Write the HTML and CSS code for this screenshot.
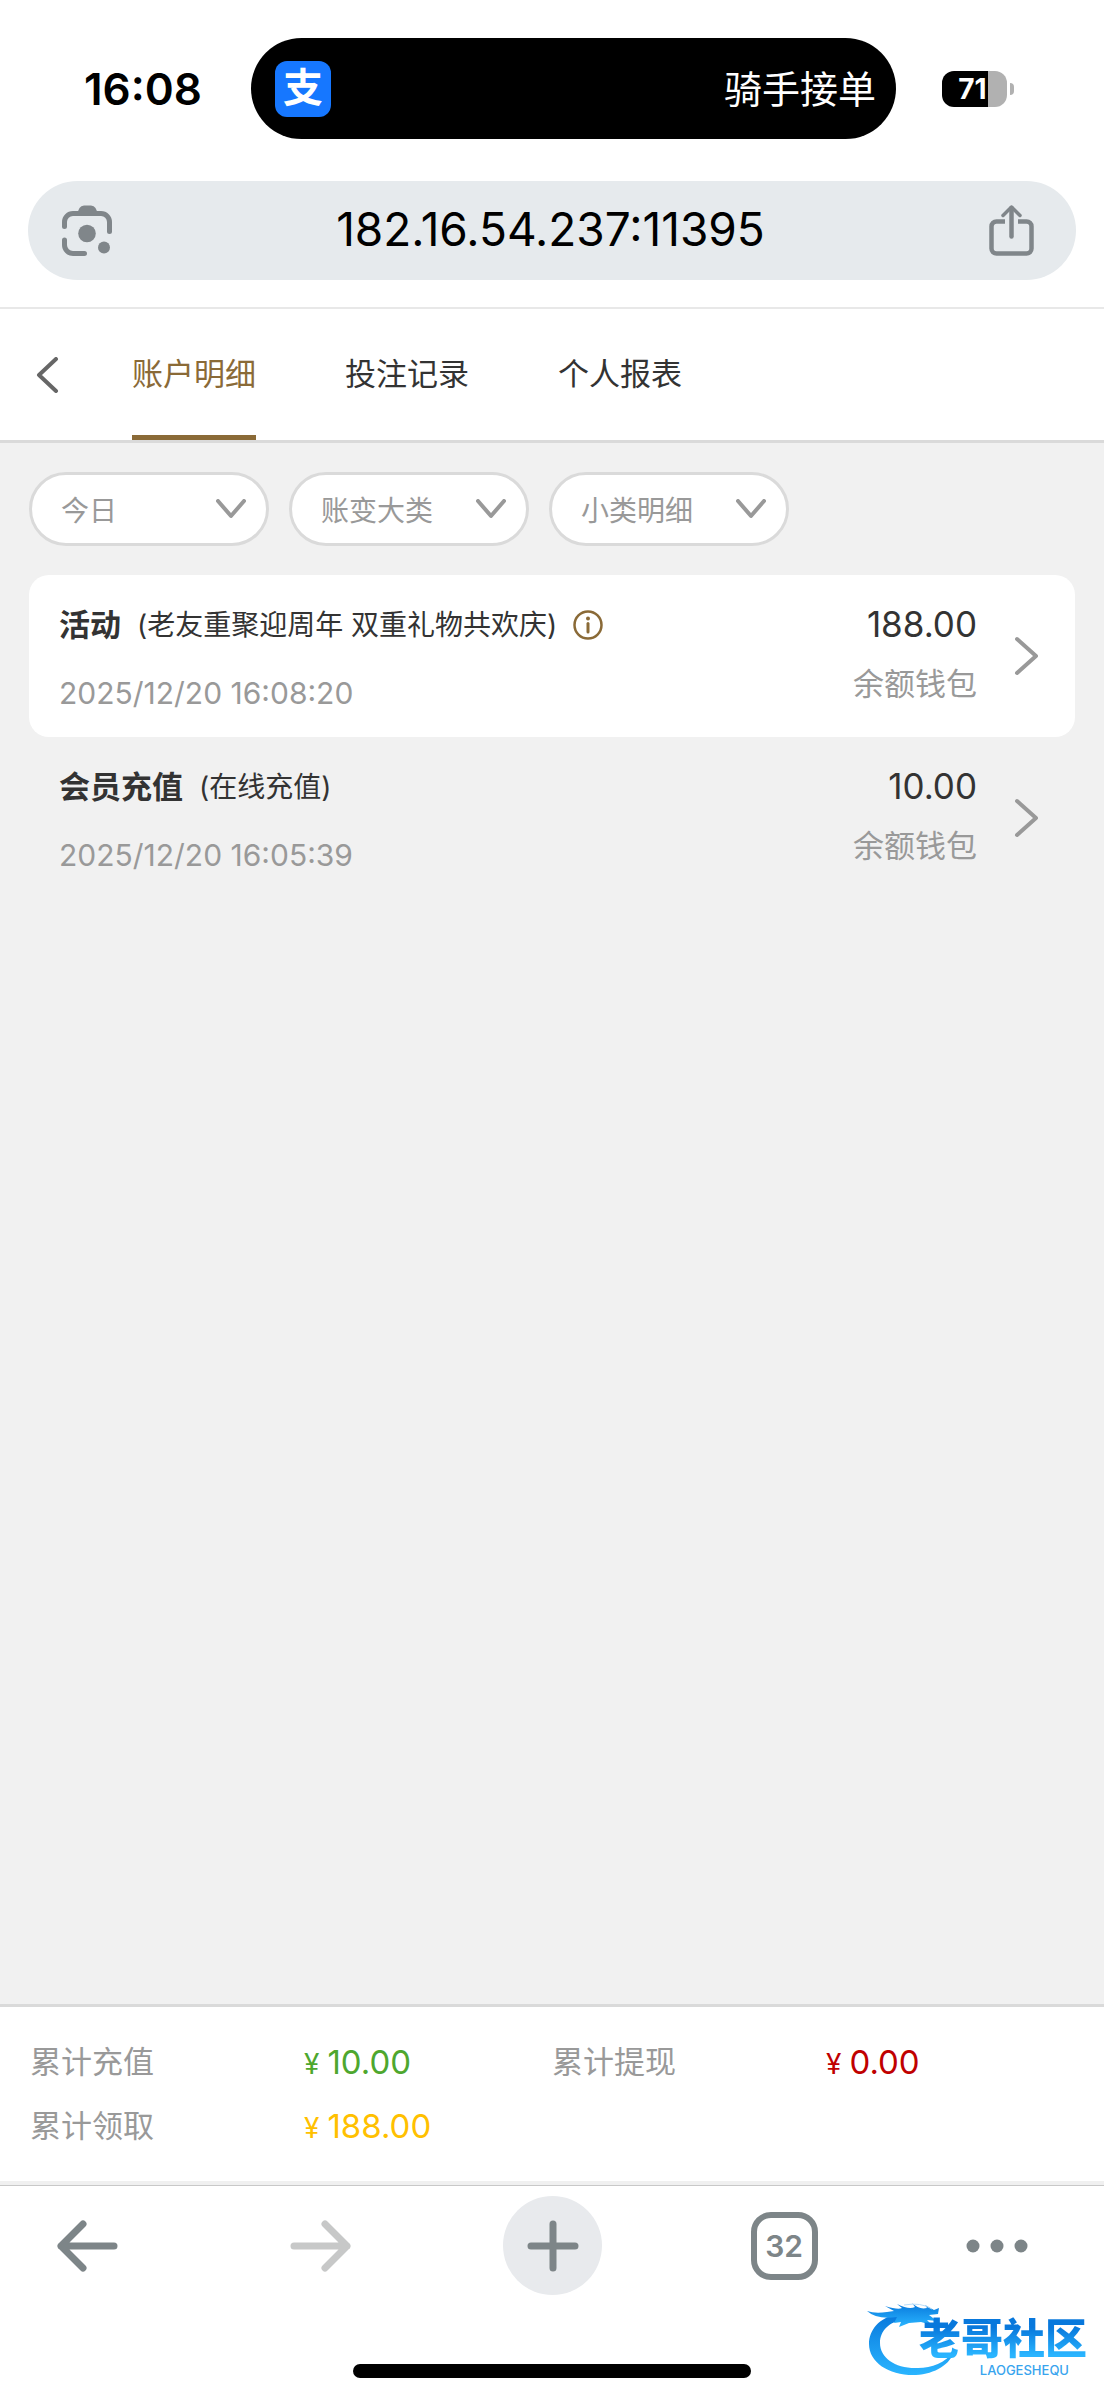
FILE: index.html
```html
<!DOCTYPE html>
<html lang="zh-CN">
<head>
    <meta charset="UTF-8">
    <meta name="viewport" content="width=device-width, initial-scale=1.0">
    <title>账户明细</title>
    <link rel="stylesheet" href="styles.css">
</head>
<body>

    <!-- Status bar -->
    <div class="status-bar">
        <span class="time">16:08</span>
        <div class="island">
            <span class="app-icon">支</span>
            <span class="island-text">骑手接单</span>
        </div>
        <div class="battery-wrap">
            <span class="battery">71</span>
            <span class="battery-tip"></span>
        </div>
    </div>

    <!-- Address bar -->
    <div class="address-row">
        <div class="address-bar">
            <button class="icon-button" aria-label="拍照搜索">
                <svg width="50" height="51" viewBox="0 0 50 51" fill="none" stroke="#80868a" stroke-width="5" stroke-linecap="round">
                    <path d="M2.5 21.5V17a8.5 8.5 0 0 1 8.5-8.5H39a8.5 8.5 0 0 1 8.5 8.5V26.5"/>
                    <path d="M2.5 35V40a8.5 8.5 0 0 0 8.5 8.5H22.5"/>
                    <path d="M15 8.5L17.5 3Q19 .5 22 .5H29Q32 .5 33.5 3L36 8.5Z" fill="#80868a" stroke="none"/>
                    <circle cx="25" cy="28.5" r="8.8" fill="#80868a" stroke="none"/>
                    <circle cx="42" cy="42.5" r="6" fill="#80868a" stroke="none"/>
                </svg>
            </button>
            <input class="address-input" type="text" value="182.16.54.237:11395" aria-label="网址">
            <button class="icon-button" aria-label="分享">
                <svg width="45" height="52" viewBox="0 0 45 52" fill="none" stroke="#80868a" stroke-width="4.5">
                    <path d="M16 16.5H7.5a5 5 0 0 0-5 5V43.5a5 5 0 0 0 5 5H37.5a5 5 0 0 0 5-5V21.5a5 5 0 0 0-5-5H29"/>
                    <path d="M22.5 3V31.5" stroke-linecap="round"/>
                    <path d="M14 10.5L22.5 2L31 10.5" stroke-width="3.5" stroke-linecap="round" stroke-linejoin="round"/>
                </svg>
            </button>
        </div>
    </div>

    <!-- Page tabs -->
    <header class="tab-header">
        <button class="icon-button back-button" aria-label="返回">
            <svg width="24" height="36" viewBox="0 0 24 36" fill="none" stroke="#666" stroke-width="4" stroke-linecap="round" stroke-linejoin="round">
                <path d="M21 2L4 18L21 34"/>
            </svg>
        </button>
        <nav class="tabs">
            <a class="tab active" href="#account">账户明细</a>
            <a class="tab" href="#bets">投注记录</a>
            <a class="tab" href="#report">个人报表</a>
        </nav>
    </header>

    <main class="content">
        <!-- Filters -->
        <div class="filters">
            <div class="filter">
                <select aria-label="日期">
                    <option>今日</option>
                </select>
                <svg class="filter-arrow" width="30" height="20" viewBox="0 0 30 20"><path d="M2 2L15 17L28 2"/></svg>
            </div>
            <div class="filter">
                <select aria-label="账变大类">
                    <option>账变大类</option>
                </select>
                <svg class="filter-arrow" width="30" height="20" viewBox="0 0 30 20"><path d="M2 2L15 17L28 2"/></svg>
            </div>
            <div class="filter">
                <select aria-label="小类明细">
                    <option>小类明细</option>
                </select>
                <svg class="filter-arrow" width="30" height="20" viewBox="0 0 30 20"><path d="M2 2L15 17L28 2"/></svg>
            </div>
        </div>

        <!-- Records -->
        <a class="record record-white" href="#record1">
            <div class="record-info">
                <div class="record-title">
                    <strong>活动</strong>
                    <span class="record-note">(老友重聚迎周年 双重礼物共欢庆)</span>
                    <svg width="30" height="30" viewBox="0 0 30 30" fill="none" stroke="#8a6a37" stroke-width="2.5">
                        <circle cx="15" cy="15" r="13.5"/>
                        <path d="M15 13.5V22" stroke-width="3" stroke-linecap="round"/>
                        <circle cx="15" cy="8.5" r="2" fill="#8a6a37" stroke="none"/>
                    </svg>
                </div>
                <div class="record-date">2025/12/20 16:08:20</div>
            </div>
            <div class="record-money">
                <div class="amount">188.00</div>
                <div class="wallet">余额钱包</div>
            </div>
            <svg class="record-arrow" width="26" height="40" viewBox="0 0 26 40"><path d="M3 3L22 20L3 37"/></svg>
        </a>
        <a class="record" href="#record2">
            <div class="record-info">
                <div class="record-title">
                    <strong>会员充值</strong>
                    <span class="record-note">(在线充值)</span>
                </div>
                <div class="record-date">2025/12/20 16:05:39</div>
            </div>
            <div class="record-money">
                <div class="amount">10.00</div>
                <div class="wallet">余额钱包</div>
            </div>
            <svg class="record-arrow" width="26" height="40" viewBox="0 0 26 40"><path d="M3 3L22 20L3 37"/></svg>
        </a>
    </main>

    <!-- Totals -->
    <div class="totals">
        <div class="total">
            <span class="total-label">累计充值</span>
            <span class="total-value green"><span class="yen">¥</span>10.00</span>
        </div>
        <div class="total">
            <span class="total-label">累计提现</span>
            <span class="total-value red"><span class="yen">¥</span>0.00</span>
        </div>
        <div class="total">
            <span class="total-label">累计领取</span>
            <span class="total-value yellow"><span class="yen">¥</span>188.00</span>
        </div>
    </div>

    <!-- Browser toolbar -->
    <footer class="bottom">
        <div class="toolbar">
            <button class="icon-button" aria-label="后退">
                <svg width="62" height="54" viewBox="0 0 62 54" fill="none" stroke="#7d8588" stroke-width="7" stroke-linecap="round" stroke-linejoin="round">
                    <path d="M58 27H5M27 5L5 27L27 49"/>
                </svg>
            </button>
            <button class="icon-button forward-button" aria-label="前进" disabled>
                <svg width="62" height="54" viewBox="0 0 62 54" fill="none" stroke="#c7c8c8" stroke-width="7" stroke-linecap="round" stroke-linejoin="round">
                    <path d="M4 27H57M35 5L57 27L35 49"/>
                </svg>
            </button>
            <button class="icon-button plus-button" aria-label="新标签页">
                <svg width="52" height="52" viewBox="0 0 52 52" fill="none" stroke="#7d8588" stroke-width="7" stroke-linecap="round">
                    <path d="M26 4V48M4 26H48"/>
                </svg>
            </button>
            <button class="icon-button tabs-button" aria-label="标签页">32</button>
            <button class="icon-button" aria-label="更多">
                <svg width="62" height="14" viewBox="0 0 62 14" fill="#7d8588">
                    <circle cx="7" cy="7" r="6.5"/>
                    <circle cx="31" cy="7" r="6.5"/>
                    <circle cx="55" cy="7" r="6.5"/>
                </svg>
            </button>
        </div>
        <div class="home-bar"></div>

        <!-- Community logo, floats over the corner -->
        <div class="logo">
            <svg class="logo-dragon" width="92" height="78" viewBox="0 0 92 78">
                <defs>
                    <linearGradient id="dragonBlue" x1="0" y1="0" x2="0" y2="1">
                        <stop offset="0" stop-color="#0878dc"/>
                        <stop offset="1" stop-color="#2ab5ff"/>
                    </linearGradient>
                </defs>
                <g fill="url(#dragonBlue)">
                    <path d="M30 14C12 18 2 30 2 44C2 63 23 76 49 75C68 74 84 64 87 51C78 63 65 68 51 68C29 69 13 58 13 43C13 31 22 21 38 20Z"/>
                    <path d="M0 11Q8 14 20 12L27 11L18 6Q31 10 35 8L30 4Q42 10 48 7L45 3Q52 10 60 8L58 5L67 10L72 8L71 14L62 15L70 21L60 20L65 25L54 22L42 23L32 27L34 22L27 23L30 17Q10 20 0 11Z"/>
                </g>
                <path d="M37 5Q54 2 65 9" fill="none" stroke="#b9defa" stroke-width="1"/>
            </svg>
            <span class="logo-name">老哥社区</span>
            <span class="logo-latin">LAOGESHEQU</span>
        </div>
    </footer>

</body>
</html>
```

FILE: styles.css
```css
* {
    box-sizing: border-box;
}
body {
    margin: 0;
    min-height: 100vh;
    display: flex;
    flex-direction: column;
    font-family: Inter, "Noto Sans CJK SC", sans-serif;
    color: #333;
    background-color: #fff;
}
a {
    color: inherit;
    text-decoration: none;
}
svg {
    display: block;
    flex: none;
}
.icon-button {
    padding: 0;
    border: none;
    background: none;
    font-family: inherit;
    display: flex;
    align-items: center;
    justify-content: center;
    flex: none;
}

/* Status bar */
.status-bar {
    display: flex;
    align-items: center;
    padding: 38px 90px 42px 84px;
}
.time {
    width: 167px;
    color: #000;
    font-size: 44px;
    font-weight: 600;
}
.island {
    flex: 1;
    height: 101px;
    padding: 0 20px 0 24px;
    border-radius: 51px;
    background-color: #000;
    color: #fff;
    font-size: 38px;
    display: flex;
    align-items: center;
    justify-content: space-between;
}
.island-text {
    padding-bottom: 4px;
}
.app-icon {
    width: 56px;
    height: 56px;
    border-radius: 12px;
    background-color: #1677ff;
    font-size: 40px;
    font-weight: 700;
    line-height: 54px;
    text-align: center;
}
.battery-wrap {
    margin-left: 46px;
    display: flex;
    align-items: center;
    gap: 3px;
}
.battery {
    width: 65px;
    height: 36px;
    padding-right: 4px;
    border-radius: 12px;
    background: linear-gradient(to right, #000 70%, #b1b1b1 70%);
    color: #fff;
    font-size: 28px;
    font-weight: 700;
    line-height: 36px;
    text-align: center;
}
.battery-tip {
    width: 4px;
    height: 12px;
    border-radius: 0 4px 4px 0;
    background-color: #b1b1b1;
}

/* Address bar */
.address-row {
    padding: 0 28px 27px;
    border-bottom: 2px solid #e8e8e8;
}
.address-bar {
    height: 99px;
    padding: 0 42px 0 34px;
    border-radius: 50px;
    background-color: #e6eaed;
    display: flex;
    align-items: center;
}
.address-input {
    flex: 1;
    min-width: 0;
    padding: 0 0 4px;
    border: none;
    background: none;
    color: #000;
    font-family: inherit;
    font-size: 46px;
    text-align: center;
}

/* Tabs */
.tab-header {
    height: 134px;
    padding-left: 35px;
    border-bottom: 3px solid #dadada;
    display: flex;
    align-items: stretch;
}
.back-button {
    width: 24px;
}
.tabs {
    margin-left: 73px;
    display: flex;
    gap: 89px;
}
.tab {
    border-bottom: 5px solid transparent;
    font-size: 31px;
    line-height: 130px;
}
.tab.active {
    color: #8a6a37;
    border-color: #8a6a37;
}

/* Content */
.content {
    flex: 1;
    padding: 29px 29px 0;
    background-color: #f1f1f1;
}
.filters {
    display: flex;
    gap: 20px;
    margin-bottom: 29px;
}
.filter {
    position: relative;
    width: 240px;
}
.filter select {
    width: 100%;
    height: 74px;
    padding: 3px 29px 0;
    border: 3px solid #dadada;
    border-radius: 37px;
    background-color: #fff;
    color: #999;
    font-family: inherit;
    font-size: 28px;
    appearance: none;
}
.filter-arrow {
    position: absolute;
    right: 23px;
    top: 27px;
    pointer-events: none;
    fill: none;
    stroke: #999;
    stroke-width: 4;
    stroke-linecap: round;
    stroke-linejoin: round;
}
.record {
    height: 162px;
    padding: 0 35px 0 30px;
    border-radius: 20px;
    display: flex;
    align-items: center;
}
.record-white {
    background-color: #fff;
}
.record-info {
    flex: 1;
    padding-top: 5px;
}
.record-title {
    display: flex;
    align-items: center;
    gap: 16px;
    font-size: 31px;
    line-height: 48px;
}
.record-note {
    font-size: 28px;
}
.record-date {
    margin-top: 20px;
    color: #999;
    font-size: 30px;
    line-height: 48px;
}
.record-money {
    margin-right: 37px;
    padding-top: 4px;
    text-align: right;
}
.amount {
    font-size: 35px;
    line-height: 48px;
}
.wallet {
    margin: 12px 0 8px;
    color: #999;
    font-size: 31px;
    line-height: 48px;
}
.record-arrow {
    fill: none;
    stroke: #999;
    stroke-width: 4;
    stroke-linecap: round;
    stroke-linejoin: round;
}

/* Totals */
.totals {
    padding: 23px 30px;
    border-top: 3px solid #dadada;
    border-bottom: 4px solid #f0f0f0;
    display: grid;
    grid-template-columns: 1fr 1fr;
}
.total {
    display: grid;
    grid-template-columns: 274px 1fr;
    line-height: 64px;
}
.total-label {
    color: #999;
    font-size: 31px;
}
.total-value {
    font-size: 33px;
}
.yen {
    margin-right: 8px;
    font-size: 28px;
    line-height: 28px;
}
.green {
    color: #4ea72e;
}
.red {
    color: #c00000;
}
.yellow {
    color: #ffc000;
}

/* Browser toolbar */
.bottom {
    position: relative;
    border-top: 1px solid #c8c8c8;
    padding: 10px 0 22px;
}
.toolbar {
    display: grid;
    grid-template-columns: 62px 18fr 99px 17fr 62px;
    align-items: center;
    justify-items: center;
    padding: 0 76px 0 56px;
}
.forward-button {
    padding-left: 20px;
}
.plus-button {
    width: 99px;
    height: 99px;
    border-radius: 50%;
    background-color: #e8eaed;
}
.tabs-button {
    width: 67px;
    height: 68px;
    border: 6px solid #7d8588;
    border-radius: 20px;
    color: #7d8588;
    font-size: 30px;
    font-weight: 600;
}
.home-bar {
    width: 36%;
    height: 14px;
    margin: 69px auto 0;
    border-radius: 7px;
    background-color: #000;
}

/* Logo */
.logo {
    position: absolute;
    right: 17px;
    bottom: 22px;
    width: 220px;
    height: 78px;
    display: flex;
    flex-direction: column;
    align-items: flex-end;
    justify-content: flex-end;
}
.logo-dragon {
    position: absolute;
    left: 0;
    top: 0;
}
.logo-name {
    position: relative;
    background: linear-gradient(#0878dc 25%, #2ab5ff 85%);
    background-clip: text;
    color: transparent;
    font-size: 42px;
    font-weight: 900;
    line-height: 46px;
}
.logo-latin {
    margin-right: 18px;
    color: #38a4ee;
    font-size: 13px;
    font-weight: 500;
    line-height: 16px;
}
```
